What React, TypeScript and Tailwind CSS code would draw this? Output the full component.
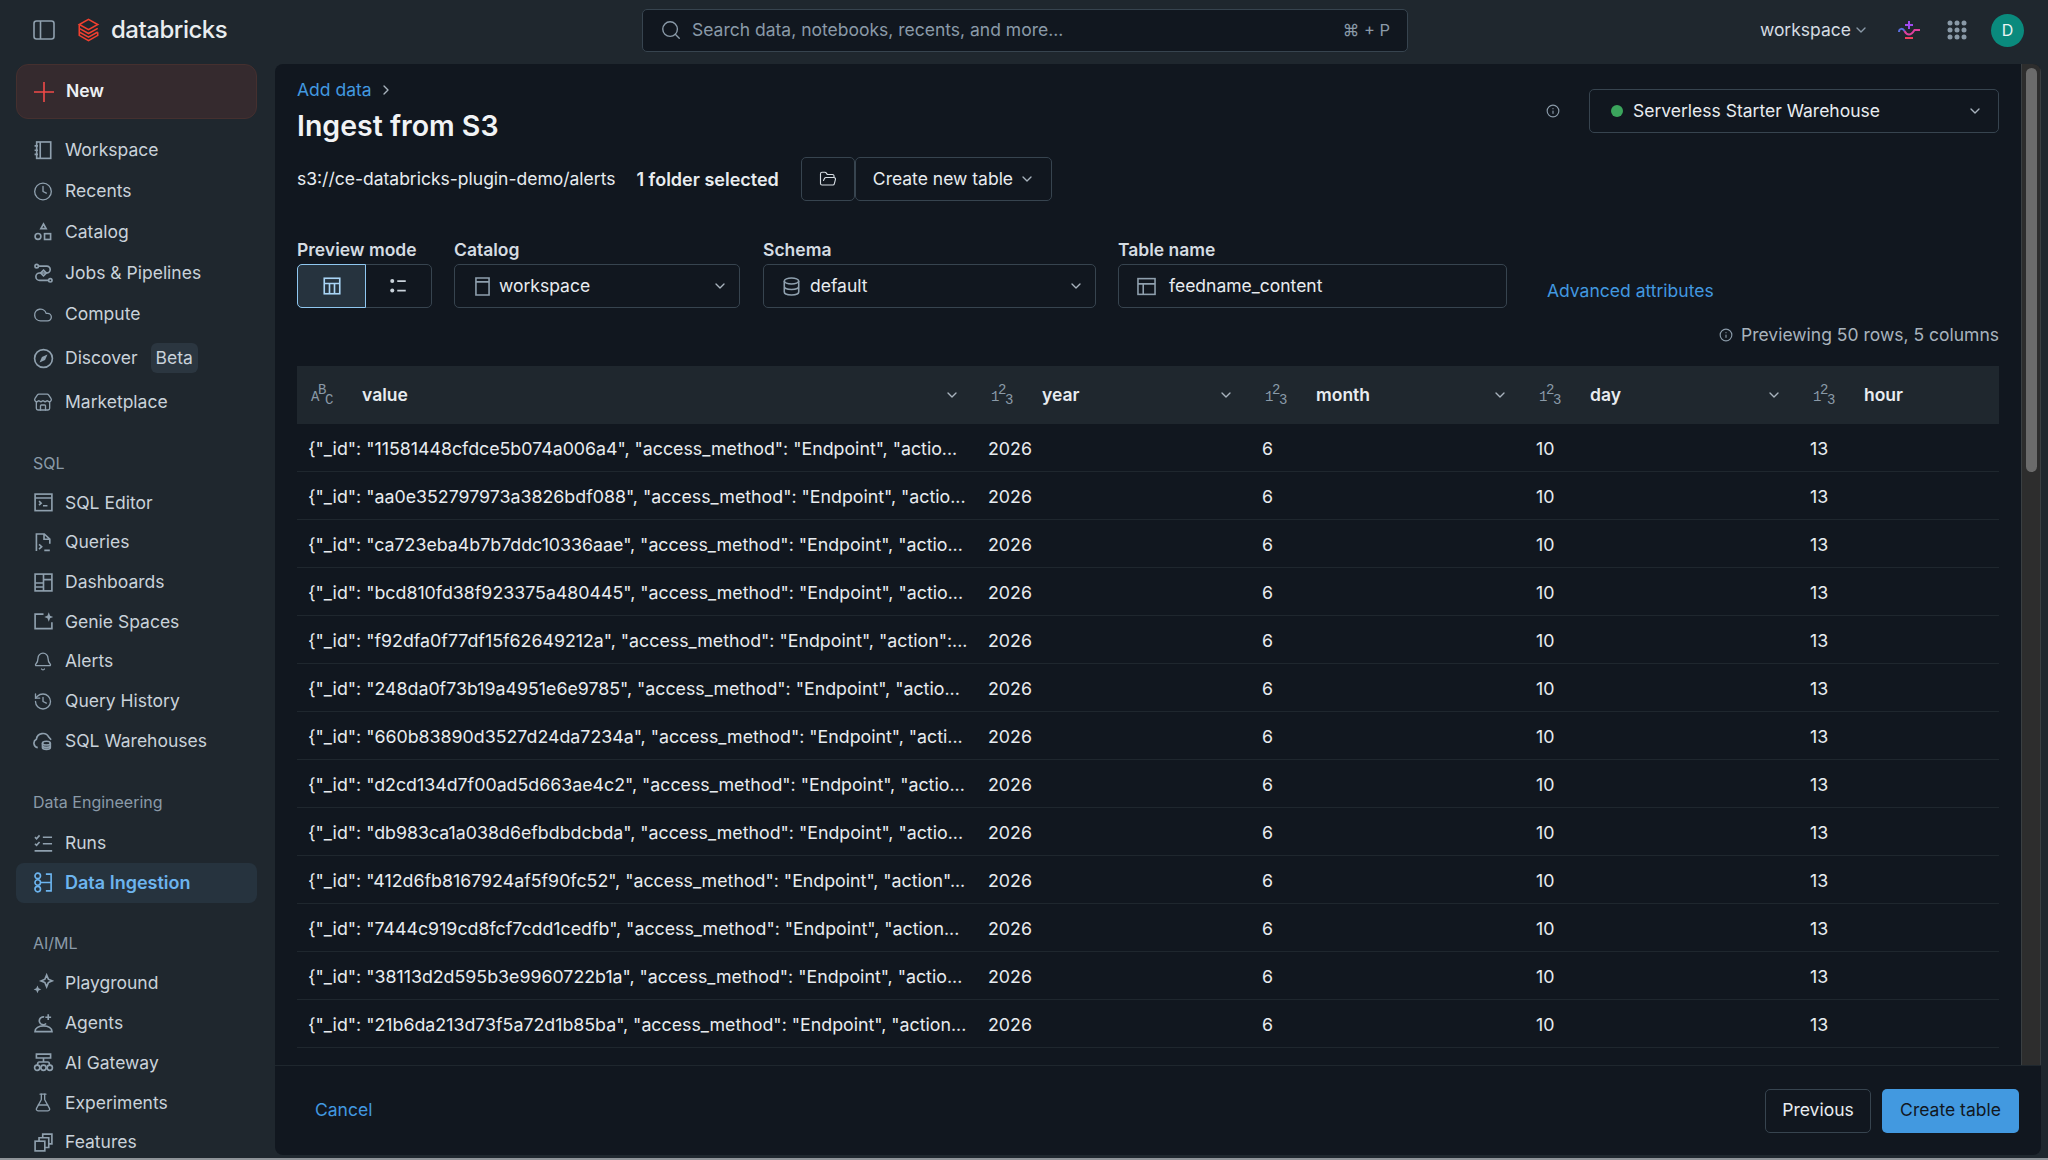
import { Bell, ChevronDown, ChevronRight, Clock, Cloud, FlaskConical, FolderOpen, History, Info, Search, Store } from "lucide-react";
import type { ReactNode } from "react";

const font = "font-['Inter',sans-serif]";

type IconProps = { children: ReactNode; className?: string };

// 16 unit grid, same as the product's own icon set
const Ic = ({ children, className = "text-[#8fa0ae]" }: IconProps) => (
  <svg
    viewBox="0 0 16 16"
    fill="none"
    stroke="currentColor"
    strokeWidth="1.25"
    className={`h-[21px] w-[21px] shrink-0 ${className}`}
  >
    {children}
  </svg>
);

const icons: Record<string, ReactNode> = {
  workspace: (
    <>
      <rect x="2.8" y="1.5" width="10.7" height="12.5" />
      <path d="M5.5 1.5v12.5M1.2 4.5h2.6M1.2 7.8h2.6M1.2 11h2.6" />
    </>
  ),
  catalog: (
    <>
      <path d="M8 1.5l2 3.5H6z" />
      <circle cx="3.8" cy="11" r="2.2" />
      <rect x="8.8" y="8.9" width="4.6" height="4.4" />
    </>
  ),
  jobs: (
    <>
      <circle cx="2.8" cy="2.4" r="1.3" />
      <circle cx="13.2" cy="13.2" r="1.3" />
      <path d="M4.2 2.4h6.3a2.6 2.6 0 0 1 0 5.2H5a2.6 2.6 0 0 0 0 5.6h6.8" />
      <path d="M8 5.4l2.2 2.2L8 9.8 5.8 7.6z" />
    </>
  ),
  discover: (
    <>
      <circle cx="8" cy="8" r="6.8" />
      <path d="M11 5L9.2 9.2 5 11l1.8-4.2z" fill="currentColor" stroke="none" />
    </>
  ),
  editor: (
    <>
      <rect x="1.6" y="1.6" width="12.8" height="12.6" />
      <path d="M1.6 4.6h12.8M4.6 7l1.6 1.5-1.6 1.5M7.6 10.5h3.4" />
    </>
  ),
  queries: (
    <>
      <path d="M2.6 14.5V1.5h6l4.2 4v3.5M8.4 1.5v4h4.4" />
      <path d="M4.6 9.4l2 1.8-2 1.8M8.6 14h4.2" />
    </>
  ),
  dashboards: (
    <>
      <rect x="1.6" y="1.6" width="12.8" height="12.8" />
      <path d="M8 1.6v12.8M1.6 8.4H8M8 5.8h6.4M1.6 11.4H8" />
    </>
  ),
  genie: (
    <>
      <path d="M8 2.4H1.6v11h12.8V8.6" />
      <path d="M12 1l1 2.6 2.4 1-2.4 1-1 2.6-1-2.6-2.4-1 2.4-1z" fill="currentColor" stroke="none" />
    </>
  ),
  warehouse: (
    <>
      <path d="M3.6 13.4a3.4 3.4 0 0 1-1-6.4A5 5 0 0 1 12 5.4l1.8 2" />
      <ellipse cx="10.2" cy="10" rx="3" ry="1.4" />
      <path d="M7.2 10v3.4c0 .8 1.3 1.4 3 1.4s3-.6 3-1.4V10M7.2 11.8c0 .8 1.3 1.4 3 1.4s3-.6 3-1.4" />
    </>
  ),
  runs: (
    <>
      <path d="M1.5 3.2l1.2 1.2L5 1.8M7.5 3.2h7M1.5 8.2l1.2 1.2L5 6.8M7.5 8.2h7M1.2 13.6h13.4" />
    </>
  ),
  ingestion: (
    <>
      <circle cx="3.6" cy="3" r="2.1" />
      <circle cx="3.6" cy="8" r="2.1" />
      <circle cx="3.6" cy="13" r="2.1" />
      <path d="M5.7 8h8M9.8 1.6h4v12.8h-4" />
    </>
  ),
  playground: (
    <>
      <path d="M10.4 1.5l1.3 3.2 3 1.3-3 1.3-1.3 3.2-1.3-3.2-3-1.3 3-1.3z" />
      <path d="M3.4 9.5l.9 2.1 2 .9-2 .9-.9 2.1-.9-2.1-2-.9 2-.9z" fill="currentColor" stroke="none" />
    </>
  ),
  agents: (
    <>
      <path d="M8.5 3a3 3 0 1 0 1.5 5" />
      <path d="M11.6 1v4.4M9.4 3.2h4.4" />
      <path d="M1.5 14.2c0-2.8 3-4.4 6.5-4.4s6.5 1.6 6.5 4.4z" />
    </>
  ),
  gateway: (
    <>
      <path d="M2.6 1.6h10.8v3H2.6zM8 4.6v3.6M4 7.6h8" />
      <circle cx="3.2" cy="12" r="2" />
      <circle cx="8" cy="12" r="2" />
      <circle cx="12.8" cy="12" r="2" />
      <path d="M4 7.6l-.8 2.4M12 7.6l.8 2.4" />
    </>
  ),
  features: (
    <>
      <rect x="1.6" y="7" width="7.4" height="7.4" />
      <path d="M4.6 7V4.4H12v7.4H9M7.4 4.4V1.6h7v7.4H12" />
    </>
  ),
};

type NavRow = { label: string; icon: ReactNode; h: string; badge?: string; active?: boolean };

const topNav: NavRow[] = [
  { label: "Workspace", icon: <Ic>{icons.workspace}</Ic>, h: "h-[41px]" },
  { label: "Recents", icon: <Clock size={21} strokeWidth={1.6} className="text-[#8fa0ae]" />, h: "h-[41px]" },
  { label: "Catalog", icon: <Ic>{icons.catalog}</Ic>, h: "h-[41px]" },
  { label: "Jobs & Pipelines", icon: <Ic>{icons.jobs}</Ic>, h: "h-[41px]" },
  { label: "Compute", icon: <Cloud size={22} strokeWidth={1.6} className="text-[#8fa0ae]" />, h: "h-[41px]" },
  { label: "Discover", icon: <Ic>{icons.discover}</Ic>, h: "h-[46px]", badge: "Beta" },
  { label: "Marketplace", icon: <Store size={21} strokeWidth={1.6} className="text-[#8fa0ae]" />, h: "h-[42px]" },
];

const sqlNav: NavRow[] = [
  { label: "SQL Editor", icon: <Ic>{icons.editor}</Ic>, h: "h-[39.7px]" },
  { label: "Queries", icon: <Ic>{icons.queries}</Ic>, h: "h-[39.7px]" },
  { label: "Dashboards", icon: <Ic>{icons.dashboards}</Ic>, h: "h-[39.7px]" },
  { label: "Genie Spaces", icon: <Ic>{icons.genie}</Ic>, h: "h-[39.7px]" },
  { label: "Alerts", icon: <Bell size={21} strokeWidth={1.6} className="text-[#8fa0ae]" />, h: "h-[39.7px]" },
  { label: "Query History", icon: <History size={21} strokeWidth={1.6} className="text-[#8fa0ae]" />, h: "h-[39.7px]" },
  { label: "SQL Warehouses", icon: <Ic>{icons.warehouse}</Ic>, h: "h-[39.7px]" },
];

const engNav: NavRow[] = [
  { label: "Runs", icon: <Ic>{icons.runs}</Ic>, h: "h-[39.7px]" },
  { label: "Data Ingestion", icon: <Ic className="text-[#6cb4ee]">{icons.ingestion}</Ic>, h: "h-[39.7px]", active: true },
];

const aiNav: NavRow[] = [
  { label: "Playground", icon: <Ic>{icons.playground}</Ic>, h: "h-[39.7px]" },
  { label: "Agents", icon: <Ic>{icons.agents}</Ic>, h: "h-[39.7px]" },
  { label: "AI Gateway", icon: <Ic>{icons.gateway}</Ic>, h: "h-[39.7px]" },
  { label: "Experiments", icon: <FlaskConical size={21} strokeWidth={1.6} className="text-[#8fa0ae]" />, h: "h-[39.7px]" },
  { label: "Features", icon: <Ic>{icons.features}</Ic>, h: "h-[39.7px]" },
];

const NavItem = ({ item }: { item: NavRow }) => (
  <div
    className={`flex ${item.h} shrink-0 items-center gap-3 rounded-lg pl-[17px] ${
      item.active ? "bg-[#26333e] text-[18px] font-semibold text-[#6cb4ee]" : "text-[17.5px] text-[#c9d2da]"
    }`}
  >
    <span className="flex w-5 shrink-0 justify-center">{item.icon}</span>
    <span>{item.label}</span>
    {item.badge && (
      <span className="ml-[1px] rounded-md bg-[#2b3640] px-[5px] py-[2px] text-[#c9d2da]">
        {item.badge}
      </span>
    )}
  </div>
);

const NavHeading = ({ children, className }: { children: ReactNode; className: string }) => (
  <div className={`pl-[17px] text-[16px] text-[#8a9aa8] ${className}`}>{children}</div>
);

const Sidebar = () => (
  <aside className="flex w-[275px] shrink-0 flex-col overflow-hidden pr-[18px] pl-4">
    <div className="flex h-[55px] shrink-0 items-center gap-3 rounded-xl border border-[#45302f] bg-[#352a2e] pl-[17px] text-[17.5px] font-semibold text-[#eef1f4]">
      <svg viewBox="0 0 20 20" className="h-5 w-5" fill="none" stroke="#f04a48" strokeWidth="1.6">
        <path d="M10 0v20M0 10h20" />
      </svg>
      New
    </div>
    <div className="mt-[11px] flex flex-col">
      {topNav.map((item) => (
        <NavItem key={item.label} item={item} />
      ))}
    </div>
    <NavHeading className="mt-[28px] h-6 leading-6">SQL</NavHeading>
    <div className="mt-[8px] flex flex-col">
      {sqlNav.map((item) => (
        <NavItem key={item.label} item={item} />
      ))}
    </div>
    <NavHeading className="mt-[29px] h-6 leading-6">Data Engineering</NavHeading>
    <div className="mt-[9.6px] flex flex-col">
      {engNav.map((item) => (
        <NavItem key={item.label} item={item} />
      ))}
    </div>
    <NavHeading className="mt-[28.7px] h-6 leading-6">AI/ML</NavHeading>
    <div className="mt-[8.3px] flex flex-col">
      {aiNav.map((item) => (
        <NavItem key={item.label} item={item} />
      ))}
    </div>
  </aside>
);

const Topbar = () => (
  <header className="flex h-16 shrink-0 items-center pb-1">
    <div className="flex w-[642px] shrink-0 items-center pl-[33px]">
      <svg viewBox="0 0 22 20" className="h-[20px] w-[22px] text-[#8fa0ae]" fill="none" stroke="currentColor" strokeWidth="1.6">
        <rect x="1" y="1" width="20" height="18" rx="2.5" />
        <path d="M7.5 1v18" />
      </svg>
      <svg viewBox="0 0 24 26" className="ml-[22px] h-[24px] w-[23px]" fill="none" stroke="#f0402f" strokeWidth="1.7">
        <path d="M12 1.5l10 5.6-10 5.6-10-5.6zM2 7.4v3.8l10 5.6 10-5.6M2 11.4v3.8l10 5.6 10-5.6M2 15.4v3.4l10 5.7 10-5.7v-3.4" />
      </svg>
      <span className="ml-[11px] text-[24px] font-medium tracking-[-0.02em] text-[#e9edf0]">databricks</span>
    </div>
    <div className="flex h-[43px] w-[766px] items-center rounded-[5px] border border-[#37444f] bg-[#11171f] pr-[17px] pl-[17px]">
      <Search size={22} strokeWidth={1.5} className="text-[#8a9aa8]" />
      <span className="ml-[10px] flex-1 text-[17.5px] text-[#8a9aa8]">Search data, notebooks, recents, and more...</span>
      <span className="text-[16.5px] text-[#8a9aa8]">⌘ + P</span>
    </div>
    <div className="flex-1" />
    <div className="flex items-center pr-6">
      <span className="text-[17.5px] text-[#d5dce2]">workspace</span>
      <ChevronDown size={16} className="ml-[2px] text-[#8a9aa8]" />
      <svg viewBox="0 0 22 18" className="ml-[29px] h-[18px] w-[22px]" fill="none" strokeWidth="2">
        <path d="M11 0v8M7 4h8" stroke="#a04af0" />
        <path d="M1 11c0-4 4-4 5.5-1" stroke="#5b6ee0" />
        <path d="M6.5 10c1 2 2.5 3.5 4.5 3.5s4-2 5.5-4.5H22" stroke="#e0409f" />
        <path d="M7 17h8" stroke="#f0405f" />
      </svg>
      <svg viewBox="0 0 20 20" className="ml-[27px] h-5 w-5" fill="#8a9aa8">
        {[3, 10, 17].map((y) =>
          [3, 10, 17].map((x) => <circle key={`${x}-${y}`} cx={x} cy={y} r="2.5" />),
        )}
      </svg>
      <span className="ml-[24px] flex h-[33px] w-[33px] items-center justify-center rounded-full bg-[#0a8a7d] text-[16px] text-[#e9f5f3]">D</span>
    </div>
  </header>
);

const Field = ({ label, width, icon, value, gap = "ml-[8px]", chevron = true }: { label: string; width: string; icon: ReactNode; value: string; gap?: string; chevron?: boolean }) => (
  <div className={`flex flex-col ${width}`}>
    <span className="mb-[3px] h-[22px] text-[17.5px] leading-[22px] font-semibold text-[#d5dce2]">{label}</span>
    <div className="flex h-[44px] items-center rounded-[5px] border border-[#37444f] pr-[11px] pl-[17px] text-[17.5px] text-[#e8ecf0]">
      {icon}
      <span className={`${gap} flex-1`}>{value}</span>
      {chevron && <ChevronDown size={16} className="text-[#a8b3bd]" />}
    </div>
  </div>
);

const AbcIcon = () => (
  <span className="relative h-6 w-[22px] shrink-0 font-['Liberation_Mono',monospace] text-[14px] leading-none text-[#8a9aa8]">
    <span className="absolute bottom-[3px] left-0">A</span>
    <span className="absolute top-0 left-[7px]">B</span>
    <span className="absolute bottom-0 left-[14px]">C</span>
  </span>
);

const NumIcon = () => (
  <span className="relative h-6 w-[22px] shrink-0 font-['Liberation_Mono',monospace] text-[14px] leading-none text-[#8a9aa8]">
    <span className="absolute bottom-[3px] left-0">1</span>
    <span className="absolute top-0 left-[7px]">2</span>
    <span className="absolute bottom-0 left-[14px]">3</span>
  </span>
);

const columns = ["value", "year", "month", "day", "hour"];

const rows = [
  ["11581448cfdce5b074a006a4", "actio..."],
  ["aa0e352797973a3826bdf088", "actio..."],
  ["ca723eba4b7b7ddc10336aae", "actio..."],
  ["bcd810fd38f923375a480445", "actio..."],
  ["f92dfa0f77df15f62649212a", "action\":..."],
  ["248da0f73b19a4951e6e9785", "actio..."],
  ["660b83890d3527d24da7234a", "acti..."],
  ["d2cd134d7f00ad5d663ae4c2", "actio..."],
  ["db983ca1a038d6efbdbdcbda", "actio..."],
  ["412d6fb8167924af5f90fc52", "action\"..."],
  ["7444c919cd8fcf7cdd1cedfb", "action..."],
  ["38113d2d595b3e9960722b1a", "actio..."],
  ["21b6da213d73f5a72d1b85ba", "action..."],
  ["c04d17f2a8e9b63f10d7ae52", "actio..."],
];

const gridCols = "grid grid-cols-[680px_274px_274px_274px_1fr]";

const PreviewTable = () => (
  <div className="mt-[18px] w-[1702px]">
    <div className={`${gridCols} h-[58px] items-center bg-[#1f272e]`}>
      {columns.map((c, i) => (
        <div key={c} className="flex items-center pr-[17px] pl-[14px]">
          {i === 0 ? <AbcIcon /> : <NumIcon />}
          <span className="ml-[29px] flex-1 text-[17.5px] font-semibold text-[#e8ecf0]">{c}</span>
          {i < 4 && <ChevronDown size={16} className="text-[#a8b3bd]" />}
        </div>
      ))}
    </div>
    {rows.map(([id, tail]) => (
      <div key={id} className={`${gridCols} h-[48px] items-center border-b border-[#1f272e] pt-[3px] text-[17.8px] text-[#e8ecf0]`}>
        <div className="overflow-hidden pl-[11px] whitespace-nowrap">{`{"_id": "${id}", "access_method": "Endpoint", "${tail}`}</div>
        <div className="pl-[11px]">2026</div>
        <div className="pl-[11px]">6</div>
        <div className="pl-[11px]">10</div>
        <div className="pl-[11px]">13</div>
      </div>
    ))}
  </div>
);

const Main = () => (
  <main className="mr-[7px] mb-[3px] flex min-w-0 flex-1 flex-col overflow-hidden rounded-lg bg-[#11171f] text-[#e8ecf0]">
    <div className="flex min-h-0 flex-1">
      <div className="min-w-0 flex-1 overflow-hidden pl-[22px]">
        <div className="flex w-[1702px] justify-between">
          <div>
            <div className="mt-4 flex h-5 items-center text-[17.5px] text-[#4299e0]">
              Add data
              <ChevronRight size={16} className="ml-[6px] text-[#a8b3bd]" />
            </div>
            <h1 className="mt-[4px] h-[44px] text-[28.5px] leading-[44px] font-semibold text-[#f1f3f5]">Ingest from S3</h1>
          </div>
          <div className="mt-[25px] flex h-[44px] items-center">
            <Info size={14} className="mr-[29px] text-[#8a9aa8]" />
            <div className="flex h-[44px] w-[410px] items-center rounded-[5px] border border-[#37444f] pr-[15px] pl-[21px] text-[17.5px] text-[#e8ecf0]">
              <span className="h-3 w-3 rounded-full bg-[#3ba55c]" />
              <span className="ml-[10px] flex-1">Serverless Starter Warehouse</span>
              <ChevronDown size={16} className="text-[#a8b3bd]" />
            </div>
          </div>
        </div>

        <div className="mt-[9px] flex h-[44px] items-center text-[17.5px]">
          <span>s3://ce-databricks-plugin-demo/alerts</span>
          <span className="ml-[21px] text-[18px] font-semibold">1 folder selected</span>
          <span className="ml-[22px] flex h-[44px] w-[54px] items-center justify-center rounded-[5px] border border-[#37444f]">
            <FolderOpen size={18} strokeWidth={1.5} className="text-[#d5dce2]" />
          </span>
          <span className="flex h-[44px] w-[197px] items-center justify-between rounded-[5px] border border-[#37444f] pr-[16px] pl-[17px]">
            Create new table
            <ChevronDown size={16} className="text-[#a8b3bd]" />
          </span>
        </div>

        <div className="mt-[38px] flex items-end">
          <div className="flex w-[135px] flex-col">
            <span className="mb-[3px] h-[22px] text-[17.5px] leading-[22px] font-semibold text-[#d5dce2]">Preview mode</span>
            <div className="flex h-[44px] rounded-[5px] border border-[#37444f]">
              <span className="-m-px flex w-[69px] items-center justify-center rounded-l-[5px] border border-[#8fc7f0] bg-[#26333e]">
                <svg viewBox="0 0 16 16" className="h-5 w-5 text-[#a9d4f5]" fill="none" stroke="currentColor" strokeWidth="1.3">
                  <rect x="1.8" y="1.8" width="12.4" height="12.4" />
                  <path d="M1.8 6h12.4M6 6v8.2M10 6v8.2" />
                </svg>
              </span>
              <span className="flex flex-1 items-center justify-center">
                <svg viewBox="0 0 16 16" className="h-5 w-5 text-[#c9d2da]" fill="none" stroke="currentColor" strokeWidth="1.4">
                  <circle cx="3.4" cy="4" r="1.6" fill="currentColor" stroke="none" />
                  <circle cx="3.4" cy="11.6" r="1.6" fill="currentColor" stroke="none" />
                  <path d="M7.4 4h6.8M7.4 11.6h6.8" />
                </svg>
              </span>
            </div>
          </div>
          <Field
            label="Catalog"
            width="ml-[22px] w-[286px]"
            gap="ml-[6px]"
            icon={
              <svg viewBox="0 0 16 16" className="h-[21px] w-[21px] text-[#8fa0ae]" fill="none" stroke="currentColor" strokeWidth="1.2">
                <path d="M3 1.5h10v13H3zM3 4.5h10" />
              </svg>
            }
            value="workspace"
          />
          <Field
            label="Schema"
            width="ml-[23px] w-[333px]"
            gap="ml-[8px]"
            icon={
              <svg viewBox="0 0 16 16" className="h-[21px] w-[21px] text-[#8fa0ae]" fill="none" stroke="currentColor" strokeWidth="1.2">
                <ellipse cx="8" cy="3.8" rx="5.5" ry="2.3" />
                <path d="M2.5 3.8v8.4c0 1.3 2.5 2.3 5.5 2.3s5.5-1 5.5-2.3V3.8M2.5 8c0 1.3 2.5 2.3 5.5 2.3s5.5-1 5.5-2.3" />
              </svg>
            }
            value="default"
          />
          <Field
            label="Table name"
            width="ml-[22px] w-[389px]"
            gap="ml-[12px]"
            icon={
              <svg viewBox="0 0 16 16" className="h-[21px] w-[21px] text-[#8fa0ae]" fill="none" stroke="currentColor" strokeWidth="1.2">
                <rect x="1.5" y="2" width="13" height="12" />
                <path d="M1.5 6h13M5.5 6v8" />
              </svg>
            }
            value="feedname_content"
            chevron={false}
          />
          <span className="mb-[4px] ml-10 text-[17.5px] text-[#4299e0]">Advanced attributes</span>
        </div>

        <div className="mt-[14px] flex w-[1702px] items-center justify-end text-[17.5px] text-[#a8b3bd]">
          <Info size={14} className="mr-[8px] text-[#8a9aa8]" />
          Previewing 50 rows, 5 columns
        </div>

        <PreviewTable />
      </div>
      <div className="flex w-5 shrink-0 justify-center border-x border-[#3a3f42] bg-[#2d2d2d] pt-1">
        <div className="h-[404px] w-[11px] rounded-full bg-[#6b6b6b]" />
      </div>
    </div>
    <footer className="flex h-[90px] shrink-0 items-center border-t border-[#1f272e] pr-[22px] pl-10">
      <span className="flex-1 text-[17.5px] text-[#4299e0]">Cancel</span>
      <span className="flex h-[44px] w-[106px] items-center justify-center rounded-[5px] border border-[#37444f] text-[17.5px] text-[#e8ecf0]">Previous</span>
      <span className="ml-[11px] flex h-[44px] w-[137px] items-center justify-center rounded-[5px] bg-[#4299e0] text-[17.5px] text-[#11171f]">Create table</span>
    </footer>
  </main>
);

export default function App() {
  return (
    <div className={`flex h-[1160px] w-[2048px] flex-col overflow-hidden bg-[#1f272e] ${font}`}>
      <Topbar />
      <div className="flex min-h-0 flex-1">
        <Sidebar />
        <Main />
      </div>
      <div className="h-[2px] shrink-0 bg-[#8f9499]" />
    </div>
  );
}
